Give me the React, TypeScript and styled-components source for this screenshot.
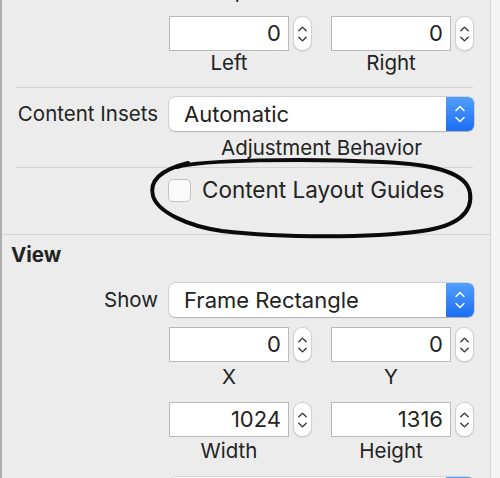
import React from 'react';
import styled, { createGlobalStyle } from 'styled-components';

const GlobalStyle = createGlobalStyle`
  html, body {
    margin: 0;
    padding: 0;
    background: #f4f4f4;
    overflow: hidden;
  }
  body {
    font-family: Inter, "Liberation Sans", sans-serif;
    color: #232323;
    -webkit-font-smoothing: antialiased;
  }
`;

const Panel = styled.div`
  position: relative;
  width: 488px;
  height: 478px;
  background: #ececec;
  border-left: 2px solid #acacac;
  border-right: 1px solid #d6d6d6;
  overflow: hidden;
`;

const Row = styled.div<{ $mt?: number }>`
  display: grid;
  grid-template-columns: 167px 305px;
  align-items: center;
  margin-top: ${p => p.$mt ?? 0}px;
`;

const RowLabel = styled.div`
  font-size: 20.5px;
  line-height: 24px;
  text-align: right;
  padding-right: 11px;
  white-space: nowrap;
`;

const Caption = styled.div<{ $mt?: number; $w?: number }>`
  font-size: 20.5px;
  line-height: 24px;
  text-align: center;
  width: ${p => (p.$w ? `${p.$w}px` : 'auto')};
  margin-top: ${p => p.$mt ?? 0}px;
  white-space: nowrap;
`;

const PairGrid = styled.div`
  display: grid;
  grid-template-columns: 143px 143px;
  column-gap: 19px;
`;

const FieldLine = styled.div`
  display: flex;
  align-items: center;
  gap: 4px;
`;

const Field = styled.div`
  box-sizing: border-box;
  width: 120px;
  height: 35px;
  background: #fff;
  border: 1px solid #b9b9b9;
  font-size: 22px;
  line-height: 33px;
  text-align: right;
  padding-right: 7px;
`;

const StepperBox = styled.div`
  box-sizing: border-box;
  width: 19px;
  height: 35px;
  border-radius: 9px;
  background: #fff;
  border: 1px solid #d0d0d0;
  box-shadow: 0 0.5px 1px rgba(0, 0, 0, 0.18);
  display: flex;
  align-items: center;
  justify-content: center;
`;

const Separator = styled.div<{ $mt: number; $full?: boolean }>`
  height: 1px;
  background: #d3d3d3;
  margin: ${p => p.$mt}px ${p => (p.$full ? 0 : 17)}px 0 ${p => (p.$full ? 0 : 14)}px;
`;

const Popup = styled.div`
  box-sizing: border-box;
  height: 34px;
  display: flex;
  background: #fff;
  border-radius: 6px;
  box-shadow: 0 0 0 0.5px rgba(0, 0, 0, 0.22), 0 1px 1px rgba(0, 0, 0, 0.16);
  overflow: hidden;
`;

const PopupText = styled.div`
  flex: 1;
  font-size: 22px;
  line-height: 34px;
  padding-left: 15px;
`;

const PopupArrows = styled.div`
  width: 28px;
  background: linear-gradient(#519ffb, #1c6ef4);
  display: flex;
  align-items: center;
  justify-content: center;
`;

const CheckRow = styled.label`
  display: flex;
  align-items: center;
  gap: 11px;
  font-size: 22.5px;
  line-height: 24px;
`;

const CheckBox = styled.span`
  box-sizing: border-box;
  width: 23px;
  height: 23px;
  margin-left: -1px;
  border-radius: 5px;
  background: #fafafa;
  border: 1px solid #c2c2c2;
`;

const SectionTitle = styled.div<{ $mt: number }>`
  font-size: 20.5px;
  font-weight: 700;
  line-height: 24px;
  padding-left: 9px;
  margin-top: ${p => p.$mt}px;
`;

const Scribble = styled.svg`
  position: absolute;
  left: 0;
  top: 0;
  pointer-events: none;
`;

const Chevrons = ({ color, w = 12 }: { color: string; w?: number }) => (
  <svg width={w} height="24" viewBox="0 0 12 24" fill="none">
    <path d="M2 8.5 L6 4.5 L10 8.5" stroke={color} strokeWidth="1.5" strokeLinecap="round" strokeLinejoin="round" />
    <path d="M2 15.5 L6 19.5 L10 15.5" stroke={color} strokeWidth="1.5" strokeLinecap="round" strokeLinejoin="round" />
  </svg>
);

const NumberField = ({ value }: { value: string }) => (
  <FieldLine>
    <Field>{value}</Field>
    <StepperBox>
      <Chevrons color="#333" w={11} />
    </StepperBox>
  </FieldLine>
);

type Pair = { a: string; b: string; la: string; lb: string };

const FieldPair = ({ pair, mt, capMt }: { pair: Pair; mt: number; capMt: number }) => (
  <Row $mt={mt}>
    <span />
    <PairGrid>
      <NumberField value={pair.a} />
      <NumberField value={pair.b} />
      <Caption $mt={capMt} $w={120}>{pair.la}</Caption>
      <Caption $mt={capMt} $w={120}>{pair.lb}</Caption>
    </PairGrid>
  </Row>
);

const PopupButton = ({ value }: { value?: string }) => (
  <Popup>
    <PopupText>{value}</PopupText>
    <PopupArrows>
      <Chevrons color="#fff" />
    </PopupArrows>
  </Popup>
);

export default function App(): JSX.Element {
  return (
    <>
      <GlobalStyle />
      <Panel>
        {/* label of the row scrolled out of view above */}
        <Row $mt={-21}>
          <span />
          <Caption $w={120}>Top</Caption>
        </Row>
        <FieldPair pair={{ a: '0', b: '0', la: 'Left', lb: 'Right' }} mt={13} capMt={0} />
        <Separator $mt={12} />

        <Row $mt={9}>
          <RowLabel>Content Insets</RowLabel>
          <PopupButton value="Automatic" />
        </Row>
        <Row $mt={5}>
          <span />
          <Caption>Adjustment Behavior</Caption>
        </Row>
        <Separator $mt={7} />

        <Row $mt={10}>
          <span />
          <CheckRow>
            <CheckBox />
            Content Layout Guides
          </CheckRow>
        </Row>
        <Separator $mt={32} $full />

        <SectionTitle $mt={8}>View</SectionTitle>
        <Row $mt={16}>
          <RowLabel>Show</RowLabel>
          <PopupButton value="Frame Rectangle" />
        </Row>
        <FieldPair pair={{ a: '0', b: '0', la: 'X', lb: 'Y' }} mt={10} capMt={3} />
        <FieldPair pair={{ a: '1024', b: '1316', la: 'Width', lb: 'Height' }} mt={13} capMt={2} />
        <Row $mt={14}>
          <span />
          <PopupButton />
        </Row>

        <Scribble width="490" height="478" viewBox="0 0 490 478">
          <path
            d="M 175 167 C 200 160, 300 158, 380 162 C 430 164, 465 172, 468 193 C 471 213, 455 226, 420 231 C 370 238, 280 238, 220 231 C 185 226, 156 212, 151 196 C 147 181, 158 170, 186 163"
            stroke="#0a0a0a"
            strokeWidth="4"
            fill="none"
            strokeLinecap="round"
          />
        </Scribble>
      </Panel>
    </>
  );
}
